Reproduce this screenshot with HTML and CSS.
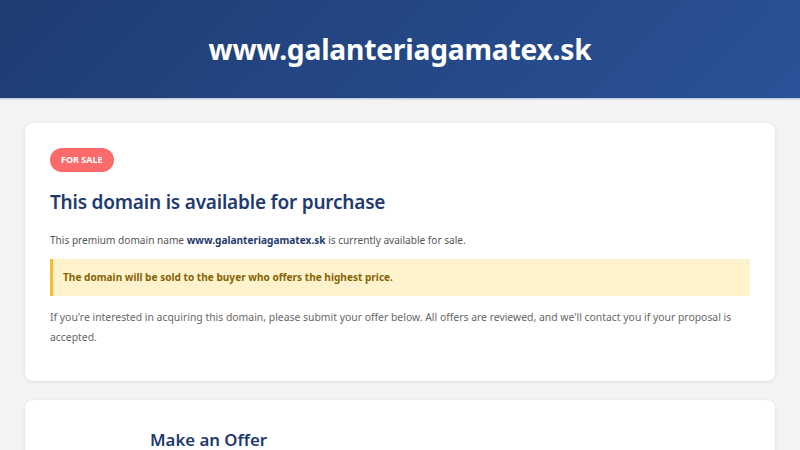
FILE: index.html
```html
<!DOCTYPE html>
<html lang="en">
<head>
<meta charset="utf-8">
<title>www.galanteriagamatex.sk</title>
<link rel="stylesheet" href="styles.css">
</head>
<body>
<header class="site-header">
  <h1 class="site-title">www.galanteriagamatex.sk</h1>
</header>
<main class="container">
  <section class="card">
    <span class="badge">FOR SALE</span>
    <h2 class="card-title">This domain is available for purchase</h2>
    <p class="lead">This premium domain name <strong class="domain">www.galanteriagamatex.sk</strong> is currently available for sale.</p>
    <div class="notice">The domain will be sold to the buyer who offers the highest price.</div>
    <p class="text">If you're interested in acquiring this domain, please submit your offer below. All offers are reviewed, and we'll contact you if your proposal is accepted.</p>
  </section>
  <section class="card offer-card">
    <div class="offer-inner">
      <h2 class="offer-title">Make an Offer</h2>
    </div>
  </section>
</main>
</body>
</html>
```
FILE: styles.css
```css
* { box-sizing: border-box; }
html, body { margin: 0; padding: 0; }
body {
  background: #f4f4f4;
  font-family: "Noto Sans", "Open Sans", sans-serif;
  color: #555;
}
.site-header {
  height: 98px;
  background: linear-gradient(135deg, #1e3c72 0%, #2a5298 100%);
  display: flex;
  align-items: center;
  justify-content: center;
  box-shadow: 0 1px 2px rgba(42, 82, 152, 0.35);
}
.site-title {
  margin: 0;
  color: #fff;
  font-size: 28.2px;
  line-height: 40px;
  font-weight: 700;
  letter-spacing: -0.2px;
}
.container {
  padding: 25px 25px;
  display: flex;
  flex-direction: column;
  gap: 19px;
}
.card {
  background: #fff;
  border-radius: 8px;
  box-shadow: 0 1px 4px rgba(0,0,0,0.10);
  padding: 25px 25px 34px;
}
.badge {
  display: inline-block;
  vertical-align: top;
  background: #fb6b6b;
  color: #fff;
  font-size: 9px;
  font-weight: 700;
  line-height: 24px;
  height: 24px;
  padding: 0 11px;
  border-radius: 12px;
}
.card-title {
  margin: 17px 0 15px;
  color: #1e3a6e;
  font-size: 19px;
  line-height: 26px;
  font-weight: 600;
  letter-spacing: -0.2px;
}
.lead, .text {
  margin: 0;
  font-size: 10.1px;
  line-height: 20px;
  color: #555;
}
.domain { color: #1e3a6e; font-weight: 700; }
.notice {
  margin: 9px 0 11px;
  background: #fff3cd;
  border-left: 3px solid #f2c02e;
  color: #856404;
  font-weight: 700;
  font-size: 10.1px;
  line-height: 37px;
  height: 37px;
  padding: 0 10px;
}
.text { color: #666; font-size: 10.4px; }
.offer-card { min-height: 120px; }
.offer-inner {
  max-width: 500px;
  margin: 0 auto;
}
.offer-title {
  margin: 3px 0 0;
  color: #1e3a6e;
  font-size: 16.8px;
  line-height: 24px;
  font-weight: 600;
}
```
